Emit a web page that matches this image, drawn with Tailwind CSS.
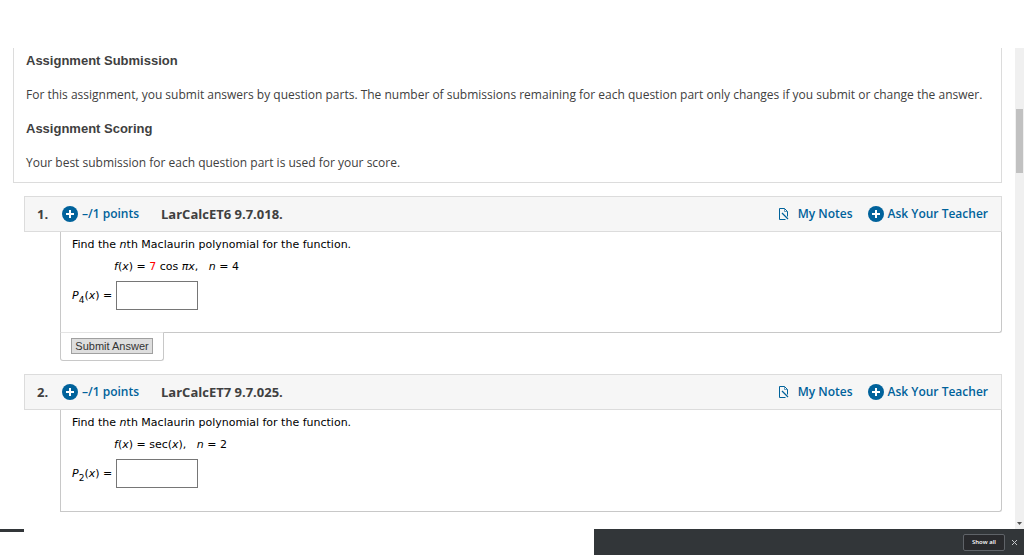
<!DOCTYPE html>
<html lang="en">
<head>
    <meta charset="UTF-8">
    <meta name="viewport" content="width=device-width, initial-scale=1.0">
    <title>Assignment</title>
    <script src="https://cdn.jsdelivr.net/npm/@tailwindcss/browser@4"></script>
</head>
<body class="flex flex-col h-screen overflow-hidden bg-white pt-12 font-['Open_Sans',sans-serif] text-xs leading-5 text-[#404040]">

    <div class="flex flex-1 min-h-0">
        <main class="flex-1 overflow-hidden pl-[13px] pr-[13px]">
            <!-- Assignment info -->
            <section class="flex flex-col gap-[14px] border border-t-0 border-[#dcdcdc] px-3 pt-[3px] pb-[9px]">
                <h2 class="font-['Liberation_Sans',sans-serif] text-[13px] leading-5 font-bold">Assignment Submission</h2>
                <p>For this assignment, you submit answers by question parts. The number of submissions remaining for each question part only changes if you submit or change the answer.</p>
                <h2 class="font-['Liberation_Sans',sans-serif] text-[13px] leading-5 font-bold">Assignment Scoring</h2>
                <p>Your best submission for each question part is used for your score.</p>
            </section>

            <!-- Question 1 -->
            <section class="mt-[13px] ml-[11px]">
                <header class="flex items-center h-9 border border-[#dcdcdc] bg-[#f6f6f6] pl-3 pr-[13px] font-semibold">
                    <span class="w-[25px] text-[13px] font-bold">1.</span>
                    <a href="#" class="flex items-center gap-1 w-[99px] text-[#00629b]">
                        <svg class="size-4" viewBox="0 0 16 16"><circle cx="8" cy="8" r="8" fill="#00629b"/><path d="M8 4v8M4 8h8" stroke="#fff" stroke-width="2"/></svg>
                        –/1 points
                    </a>
                    <span class="text-[13px] font-bold">LarCalcET6 9.7.018.</span>
                    <nav class="flex ml-auto gap-[15px] text-[#00629b]">
                        <a href="#" class="flex items-center gap-[9px]">
                            <svg class="w-[11px] h-3" viewBox="0 0 11 12" fill="none" stroke="#00629b"><path d="M7.5 11.5h-6V.5h5l3 3v5"/><path d="M6.500.5v3h3" stroke-width=".6"/><path d="M4 5l6 6" stroke-width="1.2"/></svg>
                            My Notes
                        </a>
                        <a href="#" class="flex items-center gap-1">
                            <svg class="size-4" viewBox="0 0 16 16"><circle cx="8" cy="8" r="8" fill="#00629b"/><path d="M8 4v8M4 8h8" stroke="#fff" stroke-width="2"/></svg>
                            Ask Your Teacher
                        </a>
                    </nav>
                </header>
                <div class="ml-9 rounded-br-[3px] border border-t-0 border-[#c8c8c8] pl-[11px] pt-[3px] pb-[22px] font-['DejaVu_Sans',sans-serif] text-[11px] leading-5 text-black">
                    <p>Find the <i>n</i>th Maclaurin polynomial for the function.</p>
                    <p class="mt-[2px] pl-[42px]"><i>f</i>(<i>x</i>) = <span class="text-[#f00]">7</span> cos <i>πx</i>, &nbsp; <i>n</i> = 4</p>
                    <div class="flex items-center gap-1 mt-1">
                        <label for="answer1" class="w-10 whitespace-nowrap"><i>P</i><sub class="text-[9px] -bottom-1">4</sub>(<i>x</i>) =</label>
                        <input id="answer1" type="text" class="w-[82px] h-[29px] border border-[#767676] bg-white px-1">
                    </div>
                </div>
                <div class="ml-9 -mt-px w-[104px] h-[29px] rounded-b-[3px] border border-t-[#e4e4e4] border-[#c8c8c8] bg-white pl-[10px] pt-[5px]">
                    <button type="button" class="block w-[82px] h-4 border border-[#a0a0a0] bg-[#dedede] font-['Liberation_Sans',sans-serif] text-[11px] leading-[14px] whitespace-nowrap text-[#333]">Submit Answer</button>
                </div>
            </section>

            <!-- Question 2 -->
            <section class="mt-[13px] ml-[11px]">
                <header class="flex items-center h-9 border border-[#dcdcdc] bg-[#f6f6f6] pl-3 pr-[13px] font-semibold">
                    <span class="w-[25px] text-[13px] font-bold">2.</span>
                    <a href="#" class="flex items-center gap-1 w-[99px] text-[#00629b]">
                        <svg class="size-4" viewBox="0 0 16 16"><circle cx="8" cy="8" r="8" fill="#00629b"/><path d="M8 4v8M4 8h8" stroke="#fff" stroke-width="2"/></svg>
                        –/1 points
                    </a>
                    <span class="text-[13px] font-bold">LarCalcET7 9.7.025.</span>
                    <nav class="flex ml-auto gap-[15px] text-[#00629b]">
                        <a href="#" class="flex items-center gap-[9px]">
                            <svg class="w-[11px] h-3" viewBox="0 0 11 12" fill="none" stroke="#00629b"><path d="M7.5 11.5h-6V.5h5l3 3v5"/><path d="M6.500.5v3h3" stroke-width=".6"/><path d="M4 5l6 6" stroke-width="1.2"/></svg>
                            My Notes
                        </a>
                        <a href="#" class="flex items-center gap-1">
                            <svg class="size-4" viewBox="0 0 16 16"><circle cx="8" cy="8" r="8" fill="#00629b"/><path d="M8 4v8M4 8h8" stroke="#fff" stroke-width="2"/></svg>
                            Ask Your Teacher
                        </a>
                    </nav>
                </header>
                <div class="ml-9 rounded-br-[3px] border border-t-0 border-[#c8c8c8] pl-[11px] pt-[3px] pb-[23px] font-['DejaVu_Sans',sans-serif] text-[11px] leading-5 text-black">
                    <p>Find the <i>n</i>th Maclaurin polynomial for the function.</p>
                    <p class="mt-[2px] pl-[42px]"><i>f</i>(<i>x</i>) = sec(<i>x</i>), &nbsp; <i>n</i> = 2</p>
                    <div class="flex items-center gap-1 mt-1">
                        <label for="answer2" class="w-10 whitespace-nowrap"><i>P</i><sub class="text-[9px] -bottom-1">2</sub>(<i>x</i>) =</label>
                        <input id="answer2" type="text" class="w-[82px] h-[29px] border border-[#767676] bg-white px-1">
                    </div>
                </div>
            </section>
        </main>

        <!-- Scrollbar -->
        <div class="flex flex-col items-center w-[9px] bg-[#f0f0f0] pt-[61px] pb-1">
            <div class="w-[7px] h-16 bg-[#c1c1c1]"></div>
            <svg class="mt-auto w-[5px] h-[3px]" viewBox="0 0 5 3"><path d="M0 0h5L2.500 3z" fill="#505050"/></svg>
        </div>
    </div>

    <!-- Download bar -->
    <footer class="flex items-start justify-between">
        <div class="w-6 h-[3px] bg-[#323639]"></div>
        <div class="flex items-center justify-end gap-[6px] w-[42%] h-[26px] bg-[#323639] pr-[6px]">
            <button type="button" class="w-[42px] h-[17px] rounded-xs border border-[#5f6368] bg-[#292a2d] text-[6px] leading-[15px] font-semibold text-white">Show all</button>
            <button type="button" aria-label="Close"><svg class="size-[7px]" viewBox="0 0 7 7" stroke="#c4c7ca"><path d="M1 1l5 5M6 1L1 6"/></svg></button>
        </div>
    </footer>

</body>
</html>
